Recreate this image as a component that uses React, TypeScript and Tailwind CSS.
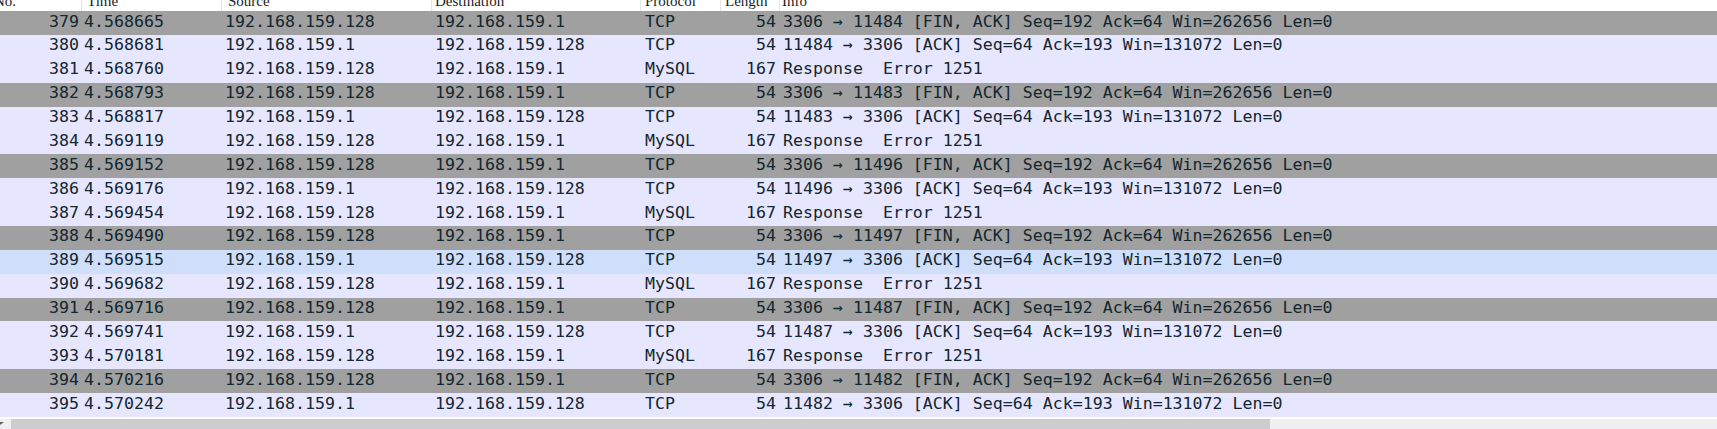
import React from "react";

type Row = {
  no: number;
  time: string;
  src: string;
  dst: string;
  proto: string;
  len: number;
  info: string;
  kind: "fin" | "norm" | "sel";
};

const A = "192.168.159.128";
const B = "192.168.159.1";

const rows: Row[] = [
  { no: 379, time: "4.568665", src: A, dst: B, proto: "TCP", len: 54, info: "3306 → 11484 [FIN, ACK] Seq=192 Ack=64 Win=262656 Len=0", kind: "fin" },
  { no: 380, time: "4.568681", src: B, dst: A, proto: "TCP", len: 54, info: "11484 → 3306 [ACK] Seq=64 Ack=193 Win=131072 Len=0", kind: "norm" },
  { no: 381, time: "4.568760", src: A, dst: B, proto: "MySQL", len: 167, info: "Response  Error 1251", kind: "norm" },
  { no: 382, time: "4.568793", src: A, dst: B, proto: "TCP", len: 54, info: "3306 → 11483 [FIN, ACK] Seq=192 Ack=64 Win=262656 Len=0", kind: "fin" },
  { no: 383, time: "4.568817", src: B, dst: A, proto: "TCP", len: 54, info: "11483 → 3306 [ACK] Seq=64 Ack=193 Win=131072 Len=0", kind: "norm" },
  { no: 384, time: "4.569119", src: A, dst: B, proto: "MySQL", len: 167, info: "Response  Error 1251", kind: "norm" },
  { no: 385, time: "4.569152", src: A, dst: B, proto: "TCP", len: 54, info: "3306 → 11496 [FIN, ACK] Seq=192 Ack=64 Win=262656 Len=0", kind: "fin" },
  { no: 386, time: "4.569176", src: B, dst: A, proto: "TCP", len: 54, info: "11496 → 3306 [ACK] Seq=64 Ack=193 Win=131072 Len=0", kind: "norm" },
  { no: 387, time: "4.569454", src: A, dst: B, proto: "MySQL", len: 167, info: "Response  Error 1251", kind: "norm" },
  { no: 388, time: "4.569490", src: A, dst: B, proto: "TCP", len: 54, info: "3306 → 11497 [FIN, ACK] Seq=192 Ack=64 Win=262656 Len=0", kind: "fin" },
  { no: 389, time: "4.569515", src: B, dst: A, proto: "TCP", len: 54, info: "11497 → 3306 [ACK] Seq=64 Ack=193 Win=131072 Len=0", kind: "sel" },
  { no: 390, time: "4.569682", src: A, dst: B, proto: "MySQL", len: 167, info: "Response  Error 1251", kind: "norm" },
  { no: 391, time: "4.569716", src: A, dst: B, proto: "TCP", len: 54, info: "3306 → 11487 [FIN, ACK] Seq=192 Ack=64 Win=262656 Len=0", kind: "fin" },
  { no: 392, time: "4.569741", src: B, dst: A, proto: "TCP", len: 54, info: "11487 → 3306 [ACK] Seq=64 Ack=193 Win=131072 Len=0", kind: "norm" },
  { no: 393, time: "4.570181", src: A, dst: B, proto: "MySQL", len: 167, info: "Response  Error 1251", kind: "norm" },
  { no: 394, time: "4.570216", src: A, dst: B, proto: "TCP", len: 54, info: "3306 → 11482 [FIN, ACK] Seq=192 Ack=64 Win=262656 Len=0", kind: "fin" },
  { no: 395, time: "4.570242", src: B, dst: A, proto: "TCP", len: 54, info: "11482 → 3306 [ACK] Seq=64 Ack=193 Win=131072 Len=0", kind: "norm" },
];

const bgFor = (k: Row["kind"]) =>
  k === "fin" ? "bg-[#a0a0a0]" : k === "sel" ? "bg-[#cfdefb]" : "bg-[#e7e6ff]";

function HeaderCell({ w, label, extra }: { w: string; label: string; extra?: string }) {
  return (
    <div className={`${w} h-[11px] overflow-hidden shrink-0 border-r border-[#e5e5e5]`}>
      <div className={`mt-[-6px] leading-[15px] text-[15px] text-[#222] whitespace-pre ${extra ?? ""}`}>{label}</div>
    </div>
  );
}

export default function App() {
  return (
    <div className="w-[1717px] h-[429px] overflow-hidden bg-white flex flex-col">
      {/* header */}
      <div
        className="flex h-[11px] shrink-0 bg-white"
        style={{ fontFamily: '"Liberation Serif", "Noto Sans CJK SC", serif' }}
      >
        <HeaderCell w="w-[82px]" label="No." extra="ml-[-6px]" />
        <HeaderCell w="w-[140px]" label="Time" extra="pl-[5px]" />
        <HeaderCell w="w-[210px]" label="Source" extra="pl-[6px]" />
        <HeaderCell w="w-[209px]" label="Destination" extra="pl-[3px]" />
        <HeaderCell w="w-[80px]" label="Protocol" extra="pl-[4px]" />
        <HeaderCell w="w-[59px]" label="Length" extra="pl-[4px]" />
        <div className="flex-1 h-[11px] overflow-hidden">
          <div className="mt-[-6px] leading-[15px] text-[15px] text-[#222] pl-[2px]">Info</div>
        </div>
      </div>

      {/* rows */}
      <div
        className="flex flex-col text-[16.6px] text-[#12272e]"
        style={{ fontFamily: '"DejaVu Sans Mono", "Liberation Mono", monospace' }}
      >
        {rows.map((r) => (
          <div key={r.no} className={`flex h-[23.88px] items-center pb-[2px] whitespace-pre ${bgFor(r.kind)}`}>
            <div className="w-[82px] shrink-0 text-right pr-[3px]">{r.no}</div>
            <div className="w-[140px] shrink-0 pl-[2px]">{r.time}</div>
            <div className="w-[210px] shrink-0 pl-[3px]">{r.src}</div>
            <div className="w-[209px] shrink-0 pl-[3px]">{r.dst}</div>
            <div className="w-[80px] shrink-0 pl-[4px]">{r.proto}</div>
            <div className="w-[59px] shrink-0 text-right pr-[4px]">{r.len}</div>
            <div className="flex-1 pl-[3px]">{r.info}</div>
          </div>
        ))}
      </div>

      <div className="h-[2px] shrink-0 bg-white" />

      {/* horizontal scrollbar */}
      <div className="flex h-[10px] shrink-0 bg-[#f0f0f0]">
        <div className="w-[11px] shrink-0">
          <svg width="11" height="10" viewBox="0 0 11 10" className="block">
            <polygon points="0,3 4,3 0,6" fill="#606060" />
          </svg>
        </div>
        <div className="w-[1259px] shrink-0 bg-[#cdcdcd]" />
        <div className="flex-1" />
      </div>
    </div>
  );
}
